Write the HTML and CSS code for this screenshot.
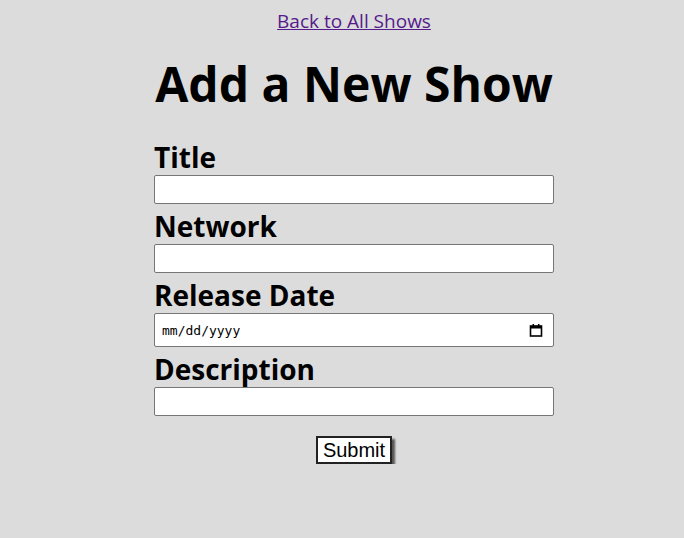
FILE: index.html
```html
<!DOCTYPE html>
<html>
<head>
<meta charset="utf-8">
<link rel="stylesheet" href="styles.css">
</head>
<body>
<div class="page">
  <a class="back" href="#">Back to All Shows</a>
  <h1 class="title">Add a New Show</h1>
  <form class="form">
    <label class="label" for="t">Title</label>
    <input class="field" id="t" type="text">
    <label class="label" for="n">Network</label>
    <input class="field" id="n" type="text">
    <label class="label" for="d">Release Date</label>
    <div class="field date"><span class="ph">mm/dd/yyyy</span>
      <svg class="cal" width="14" height="14" viewBox="0 0 14 14"><rect x="1.5" y="3" width="11" height="10" fill="none" stroke="#000" stroke-width="1.6"/><rect x="1.5" y="3" width="11" height="2.5" fill="#000"/><rect x="3.5" y="1" width="1.6" height="3" fill="#000"/><rect x="8.9" y="1" width="1.6" height="3" fill="#000"/></svg>
    </div>
    <label class="label" for="s">Description</label>
    <input class="field" id="s" type="text">
    <div class="actions"><button class="submit" type="button">Submit</button></div>
  </form>
</div>
</body>
</html>
```
FILE: styles.css
```css
html, body { margin: 0; padding: 0; background: #dcdcdc; }
body { font-family: "Open Sans", sans-serif; color: #000; padding-left: 24px; }
.page { width: 400px; margin: 0 auto; padding-top: 8px; display: flex; flex-direction: column; align-items: stretch; }
.back { align-self: center; font-size: 19px; color: #551a8b; line-height: 26px; }
.title { margin: 22px 0 0 0; text-align: center; font-size: 48px; font-weight: 700; line-height: 56px; }
.form { display: flex; flex-direction: column; margin-top: 23px; }
.label { font-size: 28px; font-weight: 700; line-height: 36px; display: block; margin-top: 4px; }
.field { box-sizing: border-box; height: 29px; border: 1px solid #767676; border-radius: 2px; background: #fff; margin: 0; padding: 0 3px; }
.date { height: 34px; display: flex; align-items: center; justify-content: space-between; padding: 0 10px 0 7px; }
.ph { font-family: "DejaVu Sans Mono", monospace; font-size: 13px; color: #000; }
.actions { display: flex; justify-content: center; margin-top: 20px; }
.submit { font-family: "Liberation Sans", Arial, sans-serif; font-size: 20px; background: #fff; border: 2px solid #222; padding: 0 5px; height: 28px; box-shadow: 3px 3px 2px #555; border-radius: 0; color: #000; }
```
